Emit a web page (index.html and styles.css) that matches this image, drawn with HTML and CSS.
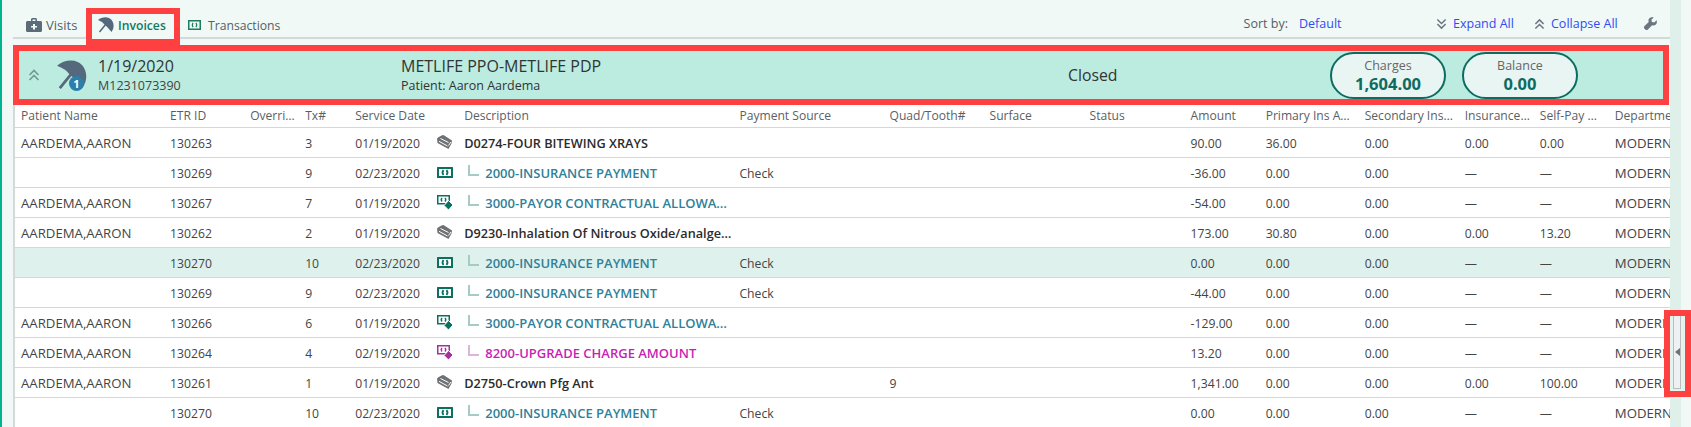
FILE: index.html
```html
<!DOCTYPE html>
<html lang="en">
<head>
<meta charset="utf-8">
<title>Invoices</title>
<link rel="stylesheet" href="styles.css">
</head>
<body>
<svg class="defs" width="0" height="0" aria-hidden="true">
  <defs>
    <symbol id="umb" viewBox="0 0 32 32">
      <path d="M0 6C6 1 15-1 22 2c7 3 10 11 9 18-.5 4-2 7-4 10L21 23Q18 19 14 16 9 9 0 6z" fill="currentColor"/>
      <path d="M16 14L3 30" stroke="currentColor" stroke-width="3" fill="none"/>
    </symbol>
    <symbol id="money" viewBox="0 0 16 11">
      <rect width="16" height="11" rx=".5" fill="currentColor"/>
      <rect x="2" y="2" width="12" height="7" fill="#fff"/>
      <path d="M6.500 3Q4.500 5.500 6.500 8M9.500 3q2 2.500 0 5" fill="none" stroke="currentColor" stroke-width="1.800"/>
    </symbol>
    <symbol id="adj" viewBox="0 0 16 15">
      <path fill-rule="evenodd" d="M0 0h13v9.500H0zM1.500 1.500v6.500h10V1.500z" fill="currentColor"/>
      <path d="M5 3Q3.500 4.750 5 6.500M8 3q1.500 1.750 0 3.500" fill="none" stroke="currentColor" stroke-width="1.400"/>
      <path d="M11.500 5.500l4.500 4.500-4.500 5L7 10.500z" fill="currentColor" stroke="#fff" stroke-width="1"/>
    </symbol>
    <symbol id="stack" viewBox="0 0 15 14">
      <path d="M6.500 0l8.500 5.500-.5 3-3 5.500L.5 8 0 3.500C1 2 4 .5 6.500 0z" fill="currentColor"/>
      <path d="M3.500 3.500l8 4M2 6.300l8.500 4.700M11.500 10.500l2.500-3.500" fill="none" stroke="#fff" stroke-width="1"/>
    </symbol>
    <symbol id="chevup" viewBox="0 0 12 12">
      <path d="M1.500 6L6 1.500 10.500 6M1.500 11L6 6.500l4.500 4.500" fill="none" stroke="currentColor" stroke-width="1.600"/>
    </symbol>
    <symbol id="chevdown" viewBox="0 0 12 12">
      <path d="M1.500 1L6 5.500 10.500 1M1.500 6L6 10.500 10.500 6" fill="none" stroke="currentColor" stroke-width="1.600"/>
    </symbol>
  </defs>
</svg>
<div class="app">
  <div class="strip"></div>
  <main class="main">
    <nav class="toolbar">
      <div class="tabs">
        <div class="tab tab-visits">
          <svg class="ic-visits" viewBox="0 0 16 14" aria-hidden="true"><path fill-rule="evenodd" d="M5 3V1.500C5 .7 5.700 0 6.500 0h3c.8 0 1.500.7 1.500 1.500V3h3.500c.8 0 1.500.7 1.500 1.500v8c0 .8-.7 1.500-1.500 1.500h-13C.7 14 0 13.300 0 12.500v-8C0 3.700.7 3 1.500 3zM6.500 1.500V3h3V1.500zM7 6v2H5v1.500h2v2h2v-2h2V8H9V6z" fill="#5b6b78"/></svg>
          <span>Visits</span>
        </div>
        <div class="tab tab-active">
          <svg class="ic-umb" aria-hidden="true"><use href="#umb"/></svg>
          <span>Invoices</span>
        </div>
        <div class="tab tab-trans">
          <svg class="ic-trans" viewBox="0 0 13 10" aria-hidden="true"><path fill-rule="evenodd" d="M0 0h13v10H0zM1.500 1.500v7h10v-7z" fill="#1c7d5f"/><path d="M5 2.800Q3.500 5 5 7.200M8 2.800q1.500 2.200 0 4.400" fill="none" stroke="#1c7d5f" stroke-width="1.300"/></svg>
          <span>Transactions</span>
        </div>
      </div>
      <div class="actions">
        <span class="sort-label">Sort by:</span>
        <a class="link sort-value">Default</a>
        <span class="action expand"><svg class="ic-chev" aria-hidden="true"><use href="#chevdown"/></svg><a class="link">Expand All</a></span>
        <span class="action collapse"><svg class="ic-chev" aria-hidden="true"><use href="#chevup"/></svg><a class="link">Collapse All</a></span>
        <svg class="ic-wrench" viewBox="0 0 14 14" aria-hidden="true"><path d="M13.500 3.500L11 6 8.500 5.500 8 3l2.500-2.500C8.500-.3 6.300.3 5.300 2c-.6 1-.6 2.200-.2 3.300L.6 9.800c-.8.800-.8 2 0 2.800l.8.800c.8.800 2 .8 2.800 0l4.500-4.500c1.100.4 2.300.4 3.300-.2 1.700-1 2.300-3.200 1.500-5.200z" fill="#6b7680"/></svg>
      </div>
    </nav>
    <section class="banner">
      <svg class="ic-chevup-lg" aria-hidden="true"><use href="#chevup"/></svg>
      <div class="banner-icon">
        <svg class="ic-umb-lg" aria-hidden="true"><use href="#umb"/></svg>
        <span class="badge">1</span>
      </div>
      <div class="banner-id">
        <div class="date">1/19/2020</div>
        <div class="mrn">M1231073390</div>
      </div>
      <div class="banner-plan">
        <div class="plan">METLIFE PPO-METLIFE PDP</div>
        <div class="patient">Patient: Aaron Aardema</div>
      </div>
      <div class="state">Closed</div>
      <div class="pill"><span class="pill-label">Charges</span><strong class="pill-value">1,604.00</strong></div>
      <div class="pill"><span class="pill-label">Balance</span><strong class="pill-value">0.00</strong></div>
    </section>
    <table class="grid">
      <colgroup>
        <col class="c-name"><col class="c-etr"><col class="c-over"><col class="c-tx"><col class="c-date"><col class="c-icon"><col class="c-desc"><col class="c-pay"><col class="c-quad"><col class="c-surf"><col class="c-stat"><col class="c-amt"><col class="c-prim"><col class="c-sec"><col class="c-ins"><col class="c-self"><col class="c-dept">
      </colgroup>
      <thead>
        <tr><th>Patient Name</th><th>ETR ID</th><th>Overrides</th><th>Tx#</th><th>Service Date</th><th></th><th>Description</th><th>Payment Source</th><th>Quad/Tooth#</th><th>Surface</th><th>Status</th><th>Amount</th><th>Primary Ins Amount</th><th>Secondary Insurance</th><th>Insurance Balance</th><th class="th-self">Self-Pay Balance</th><th>Department</th></tr>
      </thead>
      <tbody>
        <tr><td>AARDEMA,AARON</td><td>130263</td><td></td><td>3</td><td>01/19/2020</td><td class="ico gray"><svg class="i-stack"><use href="#stack"/></svg></td><td class="proc">D0274-FOUR BITEWING XRAYS</td><td></td><td></td><td></td><td></td><td>90.00</td><td>36.00</td><td>0.00</td><td>0.00</td><td>0.00</td><td>MODERN DENTAL</td></tr>
        <tr><td></td><td>130269</td><td></td><td>9</td><td>02/23/2020</td><td class="ico green"><svg class="i-money"><use href="#money"/></svg></td><td class="sub"><span class="elbow"></span><span class="subtext">2000-INSURANCE PAYMENT</span></td><td>Check</td><td></td><td></td><td></td><td>-36.00</td><td>0.00</td><td>0.00</td><td>—</td><td>—</td><td>MODERN DENTAL</td></tr>
        <tr><td>AARDEMA,AARON</td><td>130267</td><td></td><td>7</td><td>01/19/2020</td><td class="ico green"><svg class="i-adj"><use href="#adj"/></svg></td><td class="sub"><span class="elbow"></span><span class="subtext">3000-PAYOR CONTRACTUAL ALLOWANCE</span></td><td></td><td></td><td></td><td></td><td>-54.00</td><td>0.00</td><td>0.00</td><td>—</td><td>—</td><td>MODERN DENTAL</td></tr>
        <tr><td>AARDEMA,AARON</td><td>130262</td><td></td><td>2</td><td>01/19/2020</td><td class="ico gray"><svg class="i-stack"><use href="#stack"/></svg></td><td class="proc">D9230-Inhalation Of Nitrous Oxide/analgesia</td><td></td><td></td><td></td><td></td><td>173.00</td><td>30.80</td><td>0.00</td><td>0.00</td><td>13.20</td><td>MODERN DENTAL</td></tr>
        <tr class="selected"><td></td><td>130270</td><td></td><td>10</td><td>02/23/2020</td><td class="ico green"><svg class="i-money"><use href="#money"/></svg></td><td class="sub"><span class="elbow"></span><span class="subtext">2000-INSURANCE PAYMENT</span></td><td>Check</td><td></td><td></td><td></td><td>0.00</td><td>0.00</td><td>0.00</td><td>—</td><td>—</td><td>MODERN DENTAL</td></tr>
        <tr><td></td><td>130269</td><td></td><td>9</td><td>02/23/2020</td><td class="ico green"><svg class="i-money"><use href="#money"/></svg></td><td class="sub"><span class="elbow"></span><span class="subtext">2000-INSURANCE PAYMENT</span></td><td>Check</td><td></td><td></td><td></td><td>-44.00</td><td>0.00</td><td>0.00</td><td>—</td><td>—</td><td>MODERN DENTAL</td></tr>
        <tr><td>AARDEMA,AARON</td><td>130266</td><td></td><td>6</td><td>01/19/2020</td><td class="ico green"><svg class="i-adj"><use href="#adj"/></svg></td><td class="sub"><span class="elbow"></span><span class="subtext">3000-PAYOR CONTRACTUAL ALLOWANCE</span></td><td></td><td></td><td></td><td></td><td>-129.00</td><td>0.00</td><td>0.00</td><td>—</td><td>—</td><td>MODERN DENTAL</td></tr>
        <tr><td>AARDEMA,AARON</td><td>130264</td><td></td><td>4</td><td>02/19/2020</td><td class="ico magenta"><svg class="i-adj"><use href="#adj"/></svg></td><td class="sub sub-charge"><span class="elbow"></span><span class="subtext">8200-UPGRADE CHARGE AMOUNT</span></td><td></td><td></td><td></td><td></td><td>13.20</td><td>0.00</td><td>0.00</td><td>—</td><td>—</td><td>MODERN DENTAL</td></tr>
        <tr><td>AARDEMA,AARON</td><td>130261</td><td></td><td>1</td><td>01/19/2020</td><td class="ico gray"><svg class="i-stack"><use href="#stack"/></svg></td><td class="proc">D2750-Crown Pfg Ant</td><td></td><td>9</td><td></td><td></td><td>1,341.00</td><td>0.00</td><td>0.00</td><td>0.00</td><td>100.00</td><td>MODERN DENTAL</td></tr>
        <tr><td></td><td>130270</td><td></td><td>10</td><td>02/23/2020</td><td class="ico green"><svg class="i-money"><use href="#money"/></svg></td><td class="sub"><span class="elbow"></span><span class="subtext">2000-INSURANCE PAYMENT</span></td><td>Check</td><td></td><td></td><td></td><td>0.00</td><td>0.00</td><td>0.00</td><td>—</td><td>—</td><td>MODERN DENTAL</td></tr>
      </tbody>
    </table>
  </main>
  <aside class="rail"></aside>
  <div class="handle"><div class="handle-btn"><span class="handle-arrow"></span></div></div>
</div>
</body>
</html>
```
FILE: styles.css
```css
* { box-sizing: border-box; }
html, body { margin: 0; height: 427px; overflow: hidden; }
body { background: #f0f9f6; font-family: "Open Sans", "Noto Sans", sans-serif; font-size: 12.200px; color: #444; }
.defs { position: absolute; }
.app { position: relative; display: flex; height: 427px; }
.strip { width: 2px; background: #00b48f; flex: none; }
.main { width: 1668px; padding-left: 11px; flex: none; }
.rail { width: 11px; background: #dff0ea; flex: none; }

.toolbar { height: 39px; display: flex; justify-content: space-between; border-bottom: 2px solid #d4d8d8; padding-top: 8px; position: relative; }
.tabs { display: flex; align-items: flex-start; }
.tab { display: flex; align-items: center; height: 37px; font-size: 12.200px; color: #555f68; padding-bottom: 3px; }
.tab-visits { width: 73px; padding-left: 13px; gap: 4px; font-size: 13px; }
.tab-active { width: 94px; border: 6px solid #ff4040; padding-left: 6px; gap: 4px; color: #12795f; font-weight: 600; background: #f0f9f6; position: relative; z-index: 1; }
.tab-trans { padding-left: 8px; gap: 7px; }
.ic-visits { width: 16px; height: 14px; }
.ic-umb { width: 16px; height: 16px; color: #54697c; }
.ic-trans { width: 13px; height: 10px; }
.actions { display: flex; align-items: flex-start; font-size: 12.500px; padding-top: 7px; color: #555f68; }
.link { color: #2f4df2; }
.sort-value { margin-left: 11px; width: 137px; }
.action { display: inline-flex; align-items: center; gap: 6px; color: #6b7680; }
.expand { width: 98px; }
.collapse { width: 110px; }
.ic-chev { width: 11px; height: 12px; }
.ic-wrench { width: 13px; height: 13px; margin-top: 2px; margin-right: 13px; }

.banner { height: 60px; margin-top: 6px; width: 1656px; border: 6px solid #ff4040; background: #bcebe0; display: flex; align-items: center; position: relative; color: #333; }
.ic-chevup-lg { width: 12px; height: 12px; color: #6f9a92; margin-left: 9px; flex: none; }
.banner-icon { position: relative; width: 30px; height: 30px; margin-left: 17px; flex: none; }
.ic-umb-lg { display: block; width: 30px; height: 30px; color: #54697c; }
.badge { position: absolute; right: 3px; bottom: -1px; width: 15px; height: 15px; border-radius: 50%; background: #2b7fa8; color: #fff; font-size: 11px; font-weight: 700; line-height: 15px; text-align: center; }
.banner-id { margin-left: 11px; width: 303px; flex: none; }
.date { font-size: 16px; line-height: 21px; }
.mrn { font-size: 12.500px; line-height: 17px; color: #444; }
.banner-plan { width: 667px; flex: none; }
.plan { font-size: 16px; line-height: 21px; }
.patient { font-size: 12.500px; line-height: 17px; }
.state { width: 262px; font-size: 15.800px; flex: none; }
.pill { width: 116px; height: 47px; margin-right: 16px; flex: none; border: 2px solid #0d6b61; border-radius: 24px; background: #e8f5f3; display: flex; flex-direction: column; align-items: center; justify-content: center; }
.pill-label { font-size: 12.500px; line-height: 17px; color: #666; }
.pill-value { font-size: 16.500px; line-height: 19px; font-weight: 700; color: #0d6b61; }

.grid { width: 1657px; table-layout: fixed; border-collapse: collapse; background: #fff; border-left: 2px solid #d4d8d8; }
.c-name { width: 150px; } .c-etr { width: 80px; } .c-over { width: 55px; } .c-tx { width: 50px; }
.c-date { width: 82px; } .c-icon { width: 27px; } .c-desc { width: 275px; } .c-pay { width: 150px; }
.c-quad { width: 100px; } .c-surf { width: 100px; } .c-stat { width: 101px; } .c-amt { width: 75px; }
.c-prim { width: 99px; } .c-sec { width: 100px; } .c-ins { width: 75px; } .c-self { width: 75px; } .c-dept { width: 61px; }
th, td { padding: 0 6px 0 6px; white-space: nowrap; overflow: hidden; text-overflow: ellipsis; text-align: left; font-weight: 400; border-bottom: 1px solid #d5d8d8; }
th { height: 22px; color: #5a5f66; padding-bottom: 1px; padding-right: 1px; font-size: 12.100px; }
th.th-self { padding-right: 8px; }
td { height: 30px; color: #444; padding-top: 2px; }
td:first-child, td:last-child { font-size: 13.200px; }
td.proc { font-weight: 600; color: #2b2b2b; font-size: 12.700px; padding-right: 0; }
.selected td { background: #dff1ec; }
td:last-child, th:last-child { text-overflow: clip; padding-right: 0; }
.ico { padding-left: 6px; padding-right: 0; line-height: 0; padding-top: 0; }
.gray { color: #6e7275; }
.green { color: #0b7060; }
.magenta { color: #a4329c; }
.i-stack { width: 15px; height: 14px; }
.i-money { width: 16px; height: 11px; }
.i-adj { width: 16px; height: 15px; }
.sub { padding-left: 10px; padding-right: 0; font-weight: 600; font-size: 13px; color: #2f8099; }
.sub-charge { color: #c71fb4; }
.elbow { display: inline-block; width: 11px; height: 11px; border-left: 2px solid #a6cbc7; border-bottom: 2px solid #a6cbc7; margin-right: 6px; vertical-align: 2px; }
.sub-charge .elbow { border-color: #dcb6da; }

.handle { position: absolute; left: 1664px; top: 310px; width: 27px; height: 87px; border: 6px solid #ff4040; background: #e4f3ee; padding: 0 4px 2px 3px; }
.handle-btn { height: 100%; width: 8px; background: #eef1f4; border: 1px solid #bbb; border-top: none; display: flex; align-items: center; justify-content: center; }
.handle-arrow { width: 0; height: 0; border-style: solid; border-width: 4px 5px 4px 0; border-color: transparent #6d7378 transparent transparent; }
```
